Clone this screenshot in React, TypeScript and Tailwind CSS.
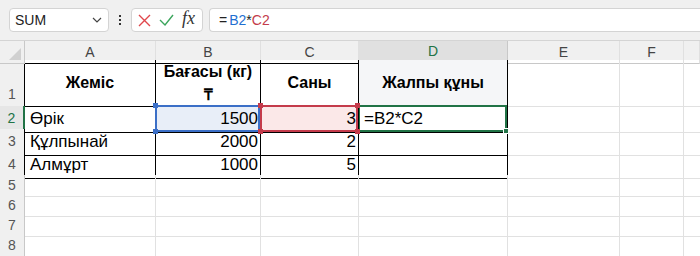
import React from "react";

const cols = ["A", "B", "C", "D", "E", "F", ""];
const font = { fontFamily: '"Liberation Sans", Arial, sans-serif' };

function Corner({ color, pos }: { color: string; pos: string }) {
  return <div className={`absolute w-[5px] h-[5px] ${color} ${pos}`} />;
}

export default function App() {
  const gridCols = "grid grid-cols-[25px_131px_105px_98px_149px_112px_64px_1fr]";
  const gl = "border-[#e1e1e1]";
  return (
    <div className="w-[700px] h-[256px] overflow-hidden bg-white" style={font}>
      {/* formula bar */}
      <div className="h-[40px] bg-[#f0f0f0] flex items-center pl-[9px] gap-0">
        <div className="w-[100px] h-[24px] bg-white border border-[#d4d4d4] rounded-[4px] flex items-center justify-between pl-[5px] pr-[6px]">
          <span className="text-[14px] text-[#222]">SUM</span>
          <svg width="10" height="6" viewBox="0 0 10 6"><path d="M1 1l4 4 4-4" fill="none" stroke="#444" strokeWidth="1.2" /></svg>
        </div>
        <div className="w-[22px] flex flex-col items-center gap-[2px]">
          <div className="w-[2px] h-[2px] bg-[#333]" />
          <div className="w-[2px] h-[2px] bg-[#333]" />
          <div className="w-[2px] h-[2px] bg-[#333]" />
        </div>
        <div className="w-[72px] h-[24px] bg-white border border-[#d4d4d4] rounded-[4px] flex items-center pl-[6px] gap-[8px]">
          <svg width="13" height="13" viewBox="0 0 13 13"><path d="M1 1l11 11M12 1L1 12" stroke="#e0474c" strokeWidth="1.4" /></svg>
          <svg width="15" height="12" viewBox="0 0 15 12"><path d="M1 6l5 5L14 1" fill="none" stroke="#3ba55c" strokeWidth="1.4" /></svg>
          <span className="text-[18px] italic text-[#333] -mt-[3px]" style={{ fontFamily: '"Liberation Serif", serif' }}>fx</span>
        </div>
        <div className="ml-[6px] flex-1 h-[24px] bg-white border border-[#d4d4d4] border-r-0 rounded-l-[4px] flex items-center pl-[9px] text-[14px]">
          <span className="text-[#222] mr-[2px]">=</span>
          <span className="text-[#1f6fd1]">B2</span>
          <span className="text-[#222]">*</span>
          <span className="text-[#c43b4b]">C2</span>
        </div>
      </div>
      {/* header row */}
      <div className={`${gridCols} h-[20px] bg-[#f0f0f0] border-t border-[#d4d4d4]`}>
        <div className="relative border-r border-b border-[#c8c8c8]">
          <svg className="absolute right-[3px] bottom-[3px]" width="12" height="12" viewBox="0 0 12 12"><path d="M12 0L12 12L0 12Z" fill="#d0d0d0" /></svg>
        </div>
        {cols.map((c, i) => (
          <div
            key={i}
            className={`flex items-center justify-center text-[14px] border-r ${
              c === "D"
                ? "bg-[#e0e0e0] text-[#217346] border-b-2 border-b-[#217346] border-r-[#c8c8c8]"
                : i < 3
                ? "text-[#444] border-b border-b-black border-r-[#e0e0e0]"
                : "text-[#444] border-b border-b-[#c8c8c8] border-r-[#e0e0e0]"
            }`}
          >
            {c}
          </div>
        ))}
      </div>
      {/* row 1 */}
      <div className={`${gridCols} h-[46px]`}>
        <div className="bg-[#f0f0f0] border-r border-r-black border-b border-b-[#d4d4d4] flex items-end justify-center pb-[1px] text-[14px] text-[#555]">1</div>
        <div className="border-r border-b border-black flex items-center justify-center font-bold text-[16px] text-black">Жеміс</div>
        <div className="border-r border-b border-black flex flex-col items-center justify-center font-bold text-[16px] text-black leading-[23px]">
          <span>Бағасы (кг)</span>
          <span>₸</span>
        </div>
        <div className="border-r border-b border-black flex items-center justify-center font-bold text-[16px] text-black">Саны</div>
        <div className="bg-[#f5f6f8] border-r border-b border-black flex items-center justify-center font-bold text-[16px] text-black">Жалпы құны</div>
        <div className={`border-r border-b ${gl}`} />
        <div className={`border-r border-b ${gl}`} />
        <div className={`border-b ${gl}`} />
      </div>
      {/* row 2 */}
      <div className={`${gridCols} h-[23px]`}>
        <div className="bg-[#e6e6e6] border-r-2 border-r-[#217346] border-b border-b-[#d4d4d4] flex items-center justify-center text-[14px] text-[#217346]">2</div>
        <div className="border-r border-b border-black flex items-center pl-[5px] text-[17px] text-black">Өрік</div>
        <div className="relative bg-[#e8eef8] border-r border-b border-black flex items-center justify-end pr-[2px] text-[17px] text-black">
          1500
          <div className="absolute -top-[1px] -left-[1px] right-0 bottom-0 border-2 border-[#3b6fc7]" />
          <Corner color="bg-[#3b6fc7]" pos="-top-[3px] -left-[3px]" />
          <Corner color="bg-[#3b6fc7]" pos="-bottom-[2px] -left-[3px]" />
        </div>
        <div className="relative z-10 bg-[#fbe8e8] border-r border-b border-black flex items-center justify-end pr-[2px] text-[17px] text-black">
          3
          <div className="absolute -top-[1px] -left-[1px] right-0 bottom-0 border-2 border-[#c43b4b]" />
          <Corner color="bg-[#c43b4b]" pos="-top-[3px] -left-[3px]" />
          <Corner color="bg-[#c43b4b]" pos="-bottom-[2px] -left-[3px]" />
          <Corner color="bg-[#c43b4b]" pos="-top-[3px] -right-[2px]" />
          <Corner color="bg-[#c43b4b]" pos="-bottom-[2px] -right-[2px]" />
        </div>
        <div className="relative border-r border-b border-black flex items-center pl-[5px] text-[17px] text-black">
          =B2*C2
          <div className="absolute -top-[1px] -left-[1px] right-0 bottom-0 border-2 border-[#217346]" />
          <div className="absolute w-[6px] h-[6px] bg-[#217346] border border-white -right-[2px] -bottom-[2px]" />
        </div>
        <div className={`border-r border-b ${gl}`} />
        <div className={`border-r border-b ${gl}`} />
        <div className={`border-b ${gl}`} />
      </div>
      {/* rows 3-4 */}
      {[
        ["3", "Құлпынай", "2000", "2"],
        ["4", "Алмұрт", "1000", "5"],
      ].map((r) => (
        <div key={r[0]} className={`${gridCols} h-[23px]`}>
          <div className="bg-[#f0f0f0] border-r border-r-black border-b border-b-[#d4d4d4] flex items-center justify-center text-[14px] text-[#555]">{r[0]}</div>
          <div className="border-r border-b border-black flex items-center pl-[5px] text-[17px] text-black">{r[1]}</div>
          <div className="border-r border-b border-black flex items-center justify-end pr-[2px] text-[17px] text-black">{r[2]}</div>
          <div className="border-r border-b border-black flex items-center justify-end pr-[2px] text-[17px] text-black">{r[3]}</div>
          <div className="border-r border-b border-black" />
          <div className={`border-r border-b ${gl}`} />
          <div className={`border-r border-b ${gl}`} />
          <div className={`border-b ${gl}`} />
        </div>
      ))}
      {/* empty rows */}
      {["5", "6", "7", "8"].map((n) => (
        <div key={n} className={`${gridCols} h-[20px]`}>
          <div className="bg-[#f0f0f0] border-r border-r-[#c8c8c8] border-b border-b-[#d4d4d4] flex items-center justify-center text-[14px] text-[#555]">{n}</div>
          {[0, 1, 2, 3, 4, 5].map((i) => (
            <div key={i} className={`border-r border-b ${gl}`} />
          ))}
          <div className={`border-b ${gl}`} />
        </div>
      ))}
    </div>
  );
}
